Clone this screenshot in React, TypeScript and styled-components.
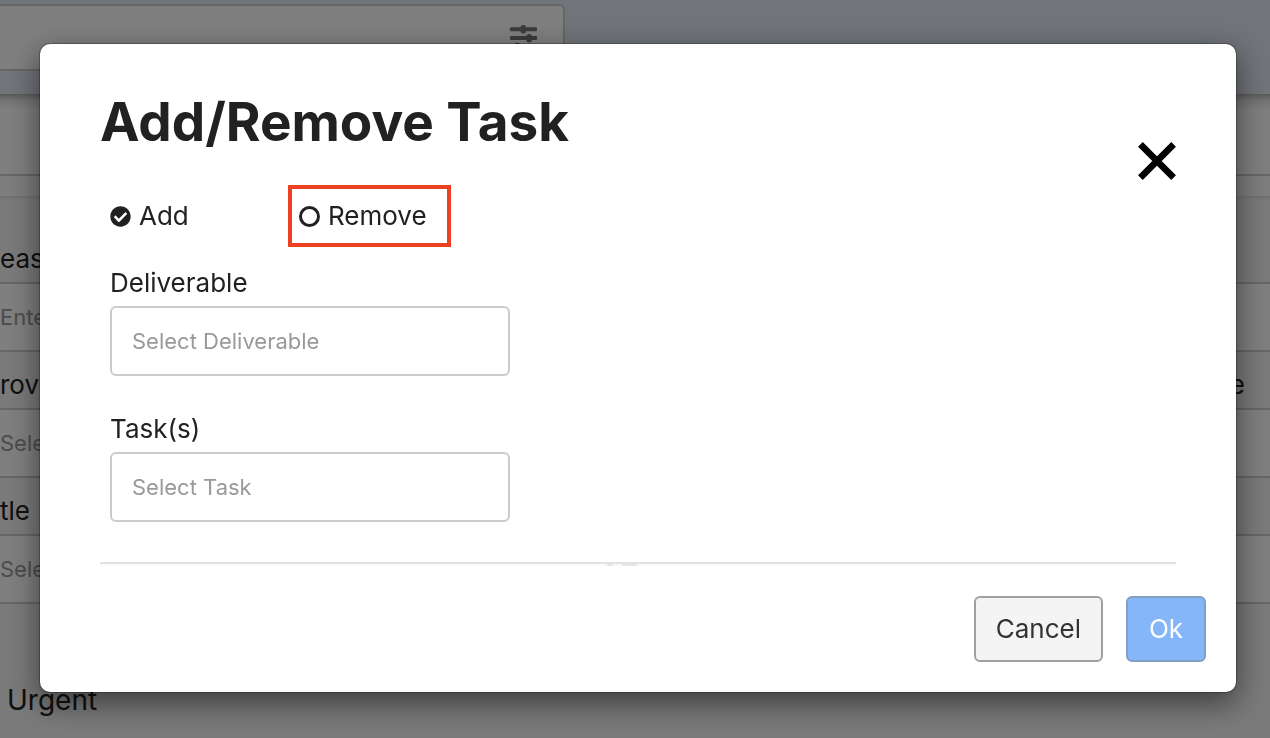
import React, { useState } from "react";
import styled, { createGlobalStyle } from "styled-components";
import { FaCheckCircle } from "react-icons/fa";

const GlobalStyle = createGlobalStyle`
  *, *::before, *::after { box-sizing: border-box; }
  body {
    margin: 0;
    background: #f4f4f4;
    color: #212121;
    font-family: Inter, "Liberation Sans", sans-serif;
    font-size: 26px;
    line-height: 32px;
  }
`;

const Page = styled.main`
  height: 100vh;
  overflow: hidden;
`;

const TopBar = styled.header`
  position: relative;
  padding: 4px 0 23px;
  background: #e2e8f2;
`;

const SearchCard = styled.div`
  display: flex;
  justify-content: flex-end;
  width: 565px;
  height: 67px;
  padding: 19px 26px;
  background: #fff;
  border: 2px solid #ccc;
  border-left: 0;
  border-radius: 0 6px 6px 0;
`;

const Spacer = styled.div`
  height: 82px;
  background: linear-gradient(#b4b4b4, #e4e4e4 6px, #fff 16px);
  border-bottom: 2px solid #ccc;
`;

const Strip = styled.div`
  height: 20px;
  background: #fafafa;
`;

const LabelRow = styled.div<{ $tall?: boolean }>`
  display: flex;
  justify-content: space-between;
  align-items: flex-end;
  height: ${(p) => (p.$tall ? 88 : 58)}px;
  padding: 0 25px 7px 0;
  background: ${(p) => (p.$tall ? "linear-gradient(#e0e0e0, #f4f4f4 4px)" : "#f4f4f4")};
  border-bottom: 2px solid #ccc;
`;

const ValueRow = styled.div`
  display: flex;
  align-items: center;
  height: 68px;
  background: #fff;
  border-bottom: 2px solid #ccc;
  color: #999;
  font-size: 22px;
`;

const Priority = styled.div`
  padding: 80px 7px 0;
  font-size: 28px;
`;

const Backdrop = styled.div`
  position: fixed;
  inset: 0;
  padding: 43px 33px 45px 39px;
  background: rgba(0, 0, 0, 0.5);
`;

const Dialog = styled.form`
  background: #fff;
  background-clip: padding-box;
  border: 1px solid rgba(0, 0, 0, 0.25);
  border-radius: 11px;
  box-shadow: 0 10px 30px rgba(0, 0, 0, 0.5);
`;

const DialogHeader = styled.div`
  display: flex;
  justify-content: space-between;
  align-items: flex-start;
  padding: 48px 60px 5px;
`;

const Title = styled.h1`
  margin: 0;
  font-size: 53px;
  line-height: 60px;
  font-weight: 700;
`;

const CloseButton = styled.button`
  display: grid;
  margin: 50px 0 0;
  padding: 0;
  background: none;
  border: 0;
  color: #000;
  cursor: pointer;
`;

const DialogBody = styled.div`
  padding: 0 70px 40px;
`;

const Choices = styled.div`
  display: flex;
  align-items: center;
  justify-content: space-between;
  width: 341px;
  margin-bottom: 20px;
`;

const Choice = styled.label<{ $outlined?: boolean }>`
  display: flex;
  align-items: center;
  gap: 8px;
  height: 62px;
  ${(p) => p.$outlined && "width: 163px; padding-left: 7px; border: 4px solid #ee4023;"}
`;

const RadioBox = styled.span`
  display: grid;
  > * { grid-area: 1 / 1; }
  > svg { pointer-events: none; }
`;

const Radio = styled.input`
  appearance: none;
  width: 21px;
  height: 21px;
  margin: 0;
  border: 3px solid #212121;
  border-radius: 50%;
  &:checked { border-color: transparent; }
`;

const Field = styled.div`
  display: flex;
  flex-direction: column;
  gap: 7px;
  & + & { margin-top: 37px; }
`;

const Select = styled.select`
  appearance: none;
  width: 100%;
  max-width: 400px;
  height: 70px;
  padding: 0 20px;
  background: #fff;
  border: 2px solid #ccc;
  border-radius: 6px;
  color: #999;
  font: inherit;
  font-size: 22px;
`;

const Divider = styled.div`
  display: flex;
  justify-content: center;
  gap: 9px;
  height: 4px;
  margin: 0 60px;
  padding-right: 32px;
  background: #fafafa;
  border-top: 2px solid #e2e2e2;
`;

const DividerMark = styled.span<{ $long?: boolean }>`
  width: ${(p) => (p.$long ? 15 : 6)}px;
  background: #e6e6e6;
`;

const DialogFooter = styled.div`
  display: flex;
  justify-content: flex-end;
  gap: 23px;
  padding: 30px;
`;

const Button = styled.button<{ $primary?: boolean }>`
  min-width: 80px;
  height: 66px;
  padding: 0 20px;
  background: ${(p) => (p.$primary ? "#84b6f9" : "#f4f4f4")};
  border: 2px solid ${(p) => (p.$primary ? "#829fc4" : "#a0a0a0")};
  border-radius: 6px;
  color: ${(p) => (p.$primary ? "#fff" : "#333")};
  font: inherit;
  cursor: pointer;
`;

const SlidersIcon = () => (
  <svg width="27" height="27" viewBox="0 0 27 27" fill="#777" aria-hidden="true">
    <rect y="2.2" width="27" height="4" rx="1" />
    <rect x="10.6" width="5.4" height="8.6" rx="2.5" />
    <rect y="11" width="27" height="4" rx="1" />
    <rect x="16.4" y="9" width="5.4" height="8.6" rx="2.5" />
    <rect y="20" width="27" height="4" rx="1" />
    <rect x="4.5" y="17.8" width="5.4" height="8.6" rx="2.5" />
  </svg>
);

const CloseIcon = () => (
  <svg width="38" height="38" viewBox="0 0 38 38" stroke="currentColor" strokeWidth="6.6" aria-hidden="true">
    <path d="M2.4 2.4 35.6 35.6M35.6 2.4 2.4 35.6" />
  </svg>
);

export default function App() {
  const [mode, setMode] = useState("add");

  const radio = (value: string) => (
    <RadioBox>
      <Radio
        type="radio"
        name="mode"
        value={value}
        checked={mode === value}
        onChange={() => setMode(value)}
      />
      {mode === value && <FaCheckCircle size={21} />}
    </RadioBox>
  );

  return (
    <>
      <GlobalStyle />
      <Page>
        <TopBar>
          <SearchCard>
            <SlidersIcon />
          </SearchCard>
        </TopBar>
        <Spacer />
        <Strip />
        <LabelRow $tall>ease</LabelRow>
        <ValueRow>Ente</ValueRow>
        <LabelRow>
          <span>rovi</span>
          <span>e</span>
        </LabelRow>
        <ValueRow>Sele</ValueRow>
        <LabelRow>tle</LabelRow>
        <ValueRow>Sele</ValueRow>
        <Priority>Urgent</Priority>
      </Page>

      <Backdrop>
        <Dialog role="dialog" aria-labelledby="dialog-title" onSubmit={(e) => e.preventDefault()}>
          <DialogHeader>
            <Title id="dialog-title">Add/Remove Task</Title>
            <CloseButton type="button" aria-label="Close">
              <CloseIcon />
            </CloseButton>
          </DialogHeader>
          <DialogBody>
            <Choices>
              <Choice>
                {radio("add")}
                Add
              </Choice>
              <Choice $outlined>
                {radio("remove")}
                Remove
              </Choice>
            </Choices>
            <Field>
              <label htmlFor="deliverable">Deliverable</label>
              <Select id="deliverable">
                <option>Select Deliverable</option>
              </Select>
            </Field>
            <Field>
              <label htmlFor="task">Task(s)</label>
              <Select id="task">
                <option>Select Task</option>
              </Select>
            </Field>
          </DialogBody>
          <Divider>
            <DividerMark />
            <DividerMark $long />
          </Divider>
          <DialogFooter>
            <Button type="button">Cancel</Button>
            <Button type="submit" $primary>
              Ok
            </Button>
          </DialogFooter>
        </Dialog>
      </Backdrop>
    </>
  );
}
